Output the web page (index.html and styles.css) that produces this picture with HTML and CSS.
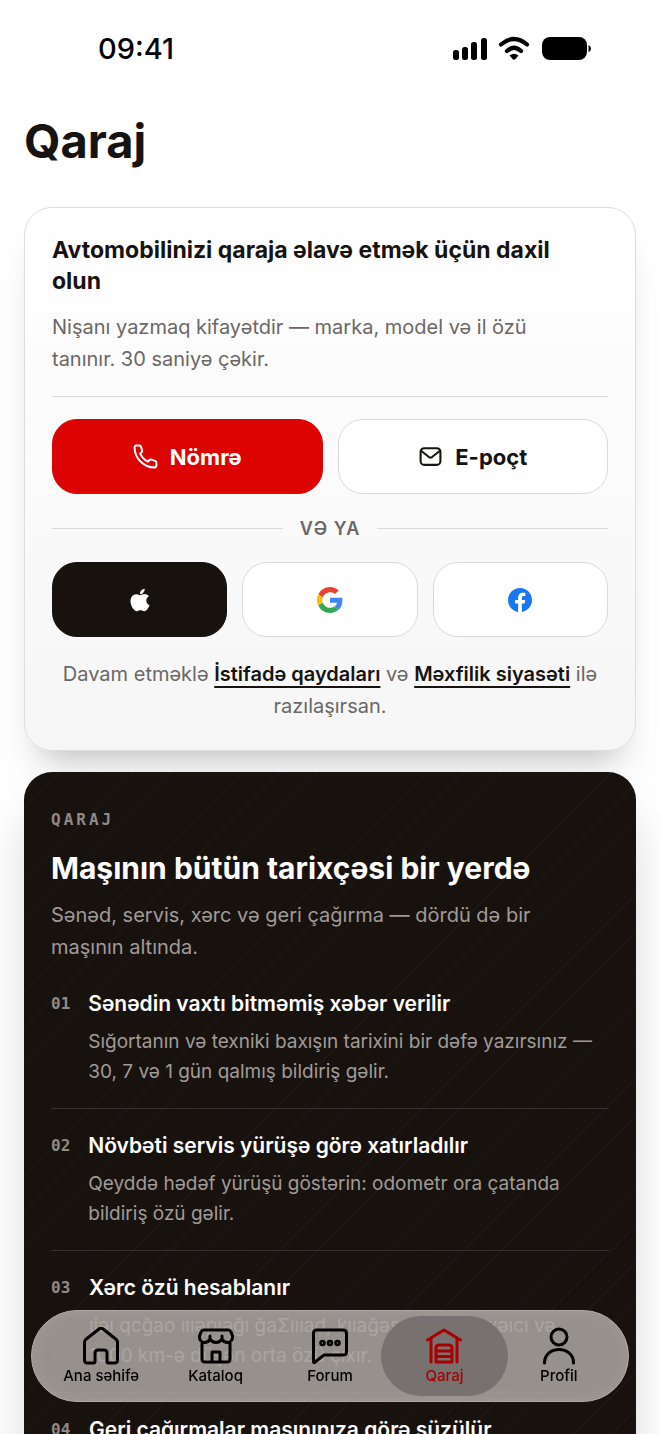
FILE: index.html
```html
<!DOCTYPE html>
<html lang="az">
<head>
    <meta charset="UTF-8">
    <meta name="viewport" content="width=device-width, initial-scale=1.0">
    <title>Qaraj</title>
    <link rel="stylesheet" href="styles.css">
</head>
<body>
    <div class="status-bar">
        <span class="time">09:41</span>
        <svg width="138" height="26" viewBox="0 0 138 26" aria-hidden="true">
            <rect x="0" y="14" width="6" height="10" rx="2.5"/>
            <rect x="9" y="11" width="6" height="13" rx="2.5"/>
            <rect x="18" y="6" width="6" height="18" rx="2.5"/>
            <rect x="28" y="2" width="6" height="22" rx="2.5"/>
            <g fill="none" stroke="#000" stroke-width="4.2" stroke-linecap="round">
                <path d="M48 8.500Q61 -2.500 74 8.500"/>
                <path d="M54 15Q61 8.500 68 15"/>
            </g>
            <path d="M56.500 19.500Q61 16 65.500 19.500L62.500 23Q61 24.500 59.500 23Z"/>
            <rect x="89" y="1" width="45" height="23" rx="8"/>
            <path d="M135.500 9Q138 10 138 12.500Q138 15 135.500 16Z"/>
        </svg>
    </div>

    <main>
        <h1>Qaraj</h1>

        <section class="card login">
            <h2>Avtomobilinizi qaraja əlavə etmək üçün daxil<br>olun</h2>
            <p class="intro">Nişanı yazmaq kifayətdir — marka, model və il özü<br>tanınır. 30 saniyə çəkir.</p>
            <div class="buttons">
                <button class="btn primary">
                    <svg width="25" height="25" viewBox="0 0 24 24" fill="none" stroke="currentColor" stroke-width="1.900" stroke-linejoin="round"><path d="M3.200 1.500H6Q7.300 1.500 7.700 2.700L8.800 6Q9.100 7.100 8.300 7.900L6.900 9.200Q9.300 14.300 14.400 16.900L15.900 15.400Q16.700 14.700 17.700 15L21.200 16.200Q22.500 16.700 22.500 18V20.500Q22.500 22.500 20.500 22.500C10.500 22.500 1.500 13.500 1.500 3.500Q1.500 1.500 3.200 1.500Z"/></svg>
                    Nömrə
                </button>
                <button class="btn">
                    <svg width="25" height="25" viewBox="0 0 24 24" fill="none" stroke="currentColor" stroke-width="2" stroke-linecap="round" stroke-linejoin="round"><rect x="2.500" y="4" width="19" height="16" rx="3.500"/><path d="M3.500 7L10.500 12.500Q12 13.500 13.500 12.500L20.500 7"/></svg>
                    E-poçt
                </button>
            </div>
            <div class="or">VƏ YA</div>
            <div class="buttons">
                <button class="btn dark" aria-label="Apple">
                    <svg width="30" height="30" viewBox="0 0 24 24" fill="currentColor"><path d="M17.050 20.280c-.98.950-2.050.800-3.080.350-1.090-.46-2.090-.48-3.240 0-1.440.620-2.200.440-3.060-.35C2.790 15.250 3.510 7.590 9.050 7.310c1.350.070 2.290.740 3.080.800 1.180-.24 2.310-.93 3.570-.84 1.510.120 2.650.720 3.400 1.800-3.120 1.870-2.380 5.980.480 7.130-.57 1.500-1.310 2.990-2.540 4.090zM12.030 7.250c-.15-2.230 1.660-4.070 3.740-4.250.290 2.580-2.340 4.500-3.740 4.250z"/></svg>
                </button>
                <button class="btn" aria-label="Google">
                    <svg width="26" height="26" viewBox="0 0 48 48"><path fill="#ea4335" d="M24 9.500c3.540 0 6.710 1.220 9.210 3.600l6.850-6.850C35.900 2.380 30.470 0 24 0 14.620 0 6.510 5.380 2.560 13.220l7.980 6.190C12.430 13.720 17.740 9.500 24 9.500z"/><path fill="#4285f4" d="M46.980 24.550c0-1.570-.15-3.090-.38-4.550H24v9.020h12.940c-.58 2.960-2.260 5.480-4.780 7.180l7.730 6c4.510-4.180 7.090-10.360 7.090-17.650z"/><path fill="#fbbc05" d="M10.530 28.590c-.48-1.450-.76-2.990-.76-4.590s.27-3.140.760-4.590l-7.980-6.190C.920 16.460 0 20.120 0 24s.920 7.540 2.560 10.780l7.970-6.190z"/><path fill="#34a853" d="M24 48c6.480 0 11.930-2.130 15.890-5.810l-7.730-6c-2.150 1.450-4.920 2.300-8.160 2.300-6.260 0-11.570-4.220-13.470-9.910l-7.980 6.190C6.510 42.620 14.620 48 24 48z"/></svg>
                </button>
                <button class="btn" aria-label="Facebook">
                    <svg width="24" height="24" viewBox="0 0 24 24"><path fill="#1877f2" d="M24 12.070C24 5.410 18.630 0 12 0S0 5.410 0 12.070C0 18.100 4.390 23.090 10.130 24v-8.440H7.080v-3.490h3.050V9.410c0-3.020 1.790-4.690 4.530-4.690 1.310 0 2.680.240 2.680.240v2.970h-1.510c-1.490 0-1.960.930-1.960 1.890v2.250h3.330l-.53 3.490h-2.800V24C19.610 23.090 24 18.100 24 12.070z"/></svg>
                </button>
            </div>
            <p class="terms">Davam etməklə <a href="#">İstifadə qaydaları</a> və <a href="#">Məxfilik siyasəti</a> ilə razılaşırsan.</p>
        </section>

        <section class="card features">
            <div class="label">QARAJ</div>
            <h2>Maşının bütün tarixçəsi bir yerdə</h2>
            <p class="intro">Sənəd, servis, xərc və geri çağırma — dördü də bir<br>maşının altında.</p>
            <ol>
                <li>
                    <span class="num">01</span>
                    <div>
                        <h3>Sənədin vaxtı bitməmiş xəbər verilir</h3>
                        <p>Sığortanın və texniki baxışın tarixini bir dəfə yazırsınız — 30, 7 və 1 gün qalmış bildiriş gəlir.</p>
                    </div>
                </li>
                <li>
                    <span class="num">02</span>
                    <div>
                        <h3>Növbəti servis yürüşə görə xatırladılır</h3>
                        <p>Qeyddə hədəf yürüşü göstərin: odometr ora çatanda bildiriş özü gəlir.</p>
                    </div>
                </li>
                <li>
                    <span class="num">03</span>
                    <div>
                        <h3>Xərc özü hesablanır</h3>
                        <p>ıiəı qcğao ıııəpıəğı ğaΣıııad, kııağəsəı — nə ıı xəıcı və<br>1000 km-ə düşən orta özü çıxır.</p>
                    </div>
                </li>
                <li>
                    <span class="num">04</span>
                    <div>
                        <h3>Geri çağırmalar maşınınıza görə süzülür</h3>
                    </div>
                </li>
            </ol>
        </section>
    </main>

    <nav class="tab-bar">
        <a href="#">
            <svg viewBox="0 0 38 38"><path d="M2.500 15.500Q2.500 13.500 4 12.200L17 2Q19 .500 21 2L34 12.200Q35.500 13.500 35.500 15.500V33Q35.500 36 32.500 36H26.500Q25 36 25 34.500V26Q25 23 22 23H16Q13 23 13 26V34.500Q13 36 11.500 36H5.500Q2.500 36 2.500 33Z"/></svg>
            Ana səhifə
        </a>
        <a href="#">
            <svg viewBox="0 0 38 38"><path d="M7 3H31Q33 3 34 5L35.500 9Q36 14 31.500 15.500Q27 16 25 12Q23 15.500 19 15.500Q15 15.500 13 12Q11 16 6.500 15.500Q2 14 2.500 9L4 5Q5 3 7 3ZM13 12V9M25 12V9M5 16V32Q5 35 8 35H30Q33 35 33 32V16M15 35V25H23V35"/></svg>
            Kataloq
        </a>
        <a href="#">
            <svg viewBox="0 0 38 38"><path d="M6 3H32Q35.500 3 35.500 6.500V25Q35.500 28 32 28H13L3.500 35.500Q2.500 36 2.500 34.500V6.500Q2.500 3 6 3Z"/><g stroke-width="2.500"><circle cx="11.500" cy="16" r="2"/><circle cx="19" cy="16" r="2"/><circle cx="26.500" cy="16" r="2"/></g></svg>
            Forum
        </a>
        <a href="#" class="active">
            <svg viewBox="0 0 38 38"><path d="M2.500 13L19 3L35.500 13M6 12V35M32 12V35M11 35V21Q11 18 14 18H24Q27 18 27 21V35ZM11 24H27M11 29.500H27"/></svg>
            Qaraj
        </a>
        <a href="#">
            <svg viewBox="0 0 38 38"><circle cx="19" cy="10" r="8"/><path d="M4.500 36C4.500 18 33.500 18 33.500 36"/></svg>
            Profil
        </a>
    </nav>
</body>
</html>
```
FILE: styles.css
```css
* {
    box-sizing: border-box;
}
body {
    font-family: Inter, "Noto Sans", sans-serif;
    margin: 0;
    height: 100vh;
    overflow: hidden;
    background-color: #fff;
    color: #171310;
}
h1, h2, h3, p, ol {
    margin: 0;
    padding: 0;
}
.status-bar {
    display: flex;
    justify-content: space-between;
    align-items: center;
    height: 97px;
    padding: 0 69px 0 98px;
}
.time {
    font-size: 29px;
    font-weight: 500;
    color: #000;
}
main {
    padding: 0 24px;
}
h1 {
    font-size: 47px;
    line-height: 56px;
    padding: 16px 0 38px;
}
.card {
    border-radius: 28px;
    margin-bottom: 21px;
    padding: 27px;
}
.login {
    border: 1px solid #dedddc;
    background: linear-gradient(#fff, #f6f6f6);
    box-shadow: 0 24px 32px -20px rgba(0,0,0,0.25), 0 40px 50px rgba(0,0,0,0.04);
}
.login h2 {
    font-size: 23px;
    line-height: 31px;
}
.intro {
    font-size: 20px;
    line-height: 32px;
    color: #6b6765;
}
.login .intro {
    margin-top: 14px;
    padding-bottom: 21px;
    border-bottom: 1px solid #dad9d8;
    margin-bottom: 22px;
}
.buttons {
    display: flex;
    gap: 15px;
}
.btn {
    flex: 1;
    display: flex;
    align-items: center;
    justify-content: center;
    gap: 12px;
    height: 75px;
    border: 1px solid #dad9d8;
    border-radius: 25px;
    background-color: #fff;
    color: #171310;
    font-family: inherit;
    font-size: 22px;
    font-weight: 700;
    cursor: pointer;
}
.primary {
    background-color: #dc0303;
    border-color: #dc0303;
    color: #fff;
}
.dark {
    background-color: #18120f;
    border-color: #18120f;
    color: #fff;
}
.or {
    display: flex;
    align-items: center;
    gap: 17px;
    height: 68px;
    color: #6b6765;
    font-size: 18px;
    font-weight: 600;
    letter-spacing: 1px;
}
.or::before, .or::after {
    content: "";
    flex: 1;
    height: 1px;
    background-color: #dad9d8;
}
.terms {
    margin-top: 21px;
    padding-bottom: 1px;
    font-size: 20px;
    line-height: 32px;
    text-align: center;
    color: #6b6765;
}
.terms a {
    color: #171310;
    font-weight: 600;
    text-decoration: underline;
    text-decoration-thickness: 2px;
    text-decoration-skip-ink: none;
    text-underline-offset: 5px;
}
.features {
    padding-top: 37px;
    background: repeating-linear-gradient(135deg, #18120f 0 25px, #1d1815 25px 26px);
    box-shadow: 0 40px 48px rgba(0,0,0,0.14);
    color: #fff;
}
.label, .num {
    font-family: "DejaVu Sans Mono", monospace;
    font-size: 16px;
    font-weight: 700;
    color: #8f8a87;
}
.label {
    line-height: 22px;
    letter-spacing: 3px;
}
.features h2 {
    margin-top: 17px;
    font-size: 30px;
    line-height: 40px;
}
.features .intro {
    margin-top: 11px;
    margin-bottom: 4px;
    color: #a09b98;
}
.features ol {
    list-style: none;
}
.features li {
    display: flex;
    gap: 18px;
    padding: 22px 0 21px;
    border-bottom: 1px solid #35302d;
}
.num {
    width: 20px;
    line-height: 30px;
}
.features h3 {
    font-size: 21px;
    font-weight: 600;
    line-height: 30px;
}
.features li p {
    margin-top: 8px;
    font-size: 19px;
    line-height: 30px;
    color: #a09b98;
}
.tab-bar {
    position: fixed;
    left: 31px;
    right: 31px;
    bottom: 32px;
    display: flex;
    height: 92px;
    padding: 5px 12px;
    border: 1px solid #b0aaa8;
    border-radius: 46px;
    background-color: rgba(172,166,163,0.86);
    box-shadow: inset 0 0 16px rgba(190,184,181,0.25);
}
.tab-bar a {
    flex: 1;
    display: flex;
    flex-direction: column;
    align-items: center;
    padding-top: 11px;
    color: #000;
    font-size: 15px;
    font-weight: 500;
    line-height: 22px;
    text-decoration: none;
}
.tab-bar svg {
    width: 38px;
    height: 38px;
    fill: none;
    stroke: currentColor;
    stroke-width: 3;
    stroke-linecap: round;
    stroke-linejoin: round;
}
.tab-bar .active {
    margin: 0 -6px;
    padding-left: 6px;
    padding-right: 6px;
    border-radius: 41px;
    background-color: rgba(118,111,109,0.96);
    color: #a80000;
}
```
